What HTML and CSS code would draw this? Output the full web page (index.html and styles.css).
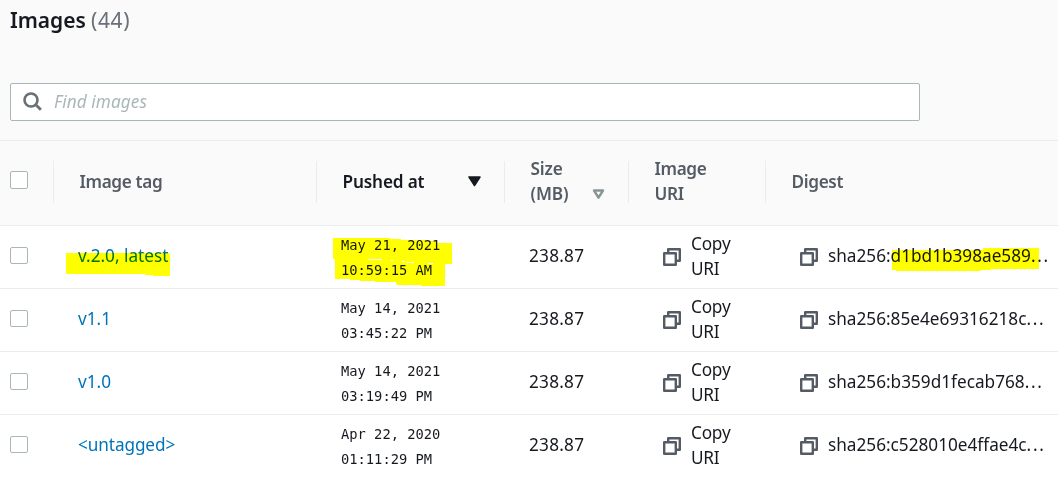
FILE: index.html
```html
<!DOCTYPE html>
<html lang="en">
<head>
<meta charset="utf-8">
<title>Images</title>
<link rel="stylesheet" href="styles.css">
</head>
<body>
<svg class="defs" width="0" height="0" aria-hidden="true">
  <symbol id="copy" viewBox="0 0 18 18"><path d="M5.2 5V1.2h11.6v11.6H13M1.2 5.2h11.6v11.6H1.2z" fill="none" stroke="#545b64" stroke-width="2.4" stroke-linejoin="round"/></symbol>
</svg>
<header class="top">
  <h1 class="title">Images <span class="count">(44)</span></h1>
  <div class="search">
    <svg class="search-icon" width="20" height="20" viewBox="0 0 20 20"><circle cx="8" cy="8" r="6.5" fill="none" stroke="#687078" stroke-width="2.6"/><path d="M12.5 12.5l5.4 5.2" stroke="#687078" stroke-width="2.8"/></svg>
    <span class="placeholder">Find images</span>
  </div>
</header>
<main class="table">
  <div class="row head">
    <div class="cell check"><span class="box"></span></div>
    <div class="cell tag">Image tag</div>
    <div class="cell pushed">Pushed at<svg class="sort" width="13" height="11" viewBox="0 0 13 11"><path d="M1 1h11L6.5 9.5z" fill="#16191f" stroke="#16191f" stroke-width="1.5" stroke-linejoin="round"/></svg></div>
    <div class="cell size"><span>Size<br>(MB)</span><svg class="sort low" width="13" height="11" viewBox="0 0 13 11"><path d="M2 1.5h9L6.5 8.7z" fill="none" stroke="#879596" stroke-width="2.4" stroke-linejoin="round"/></svg></div>
    <div class="cell uri">Image<br>URI</div>
    <div class="cell digest">Digest</div>
  </div>
  <div class="row">
    <div class="cell check"><span class="box"></span></div>
    <div class="cell tag"><a class="link latest">v.2.0, latest</a></div>
    <div class="cell pushed">May 21, 2021<br>10:59:15 AM</div>
    <div class="cell size">238.87</div>
    <div class="cell uri"><svg class="copy"><use href="#copy"/></svg><span>Copy<br>URI</span></div>
    <div class="cell digest"><svg class="copy"><use href="#copy"/></svg><span class="hash">sha256:d1bd1b398ae589<span class="more">...</span></span></div>
  </div>
  <div class="row">
    <div class="cell check"><span class="box"></span></div>
    <div class="cell tag"><a class="link">v1.1</a></div>
    <div class="cell pushed">May 14, 2021<br>03:45:22 PM</div>
    <div class="cell size">238.87</div>
    <div class="cell uri"><svg class="copy"><use href="#copy"/></svg><span>Copy<br>URI</span></div>
    <div class="cell digest"><svg class="copy"><use href="#copy"/></svg><span class="hash">sha256:85e4e69316218c<span class="more">...</span></span></div>
  </div>
  <div class="row">
    <div class="cell check"><span class="box"></span></div>
    <div class="cell tag"><a class="link">v1.0</a></div>
    <div class="cell pushed">May 14, 2021<br>03:19:49 PM</div>
    <div class="cell size">238.87</div>
    <div class="cell uri"><svg class="copy"><use href="#copy"/></svg><span>Copy<br>URI</span></div>
    <div class="cell digest"><svg class="copy"><use href="#copy"/></svg><span class="hash">sha256:b359d1fecab768<span class="more">...</span></span></div>
  </div>
  <div class="row">
    <div class="cell check"><span class="box"></span></div>
    <div class="cell tag"><a class="link untagged">&lt;untagged&gt;</a></div>
    <div class="cell pushed">Apr 22, 2020<br>01:11:29 PM</div>
    <div class="cell size">238.87</div>
    <div class="cell uri"><svg class="copy"><use href="#copy"/></svg><span>Copy<br>URI</span></div>
    <div class="cell digest"><svg class="copy"><use href="#copy"/></svg><span class="hash">sha256:c528010e4ffae4c<span class="more">...</span></span></div>
  </div>
</main>
<svg class="marker" width="1058" height="483" viewBox="0 0 1058 483" shape-rendering="crispEdges" fill="#ff0" aria-hidden="true">
  <path fill-rule="evenodd" d="M333 238H390V239H401V240H426V241H436V243H452V264H445V286H421V285H397V284H396V282H375V281H360V280H350V279H335V259H333ZM368 259H382V260H368ZM391 260H393V261H391ZM402 261H405V262H402ZM407 262H414V263H407ZM428 263H433V264H428Z"/>
  <path d="M66 253H169V254H170V276H153V275H145V274H66Z"/>
  <path d="M892 250H983V248H1039V269H991V270H981V271H896V270H892Z"/>
</svg>
</body>
</html>
```

FILE: styles.css
```css
* { box-sizing: border-box; }
body {
  margin: 0;
  width: 1058px;
  height: 483px;
  overflow: hidden;
  background: #fff;
  color: #16191f;
  font: 17.2px/25px "Noto Sans", "Open Sans", sans-serif;
}
.defs { position: absolute; }
.top {
  height: 141px;
  padding: 5px 10px 0;
  background: #fafafa;
  border-bottom: 1px solid #eaeded;
}
.title {
  margin: 0 0 48px;
  font-size: 21px;
  line-height: 30px;
  font-weight: 600;
  letter-spacing: -0.05px;
}
.count { color: #687078; font-weight: 400; letter-spacing: 0.6px; }
.search {
  display: flex;
  align-items: center;
  gap: 11px;
  width: 910px;
  height: 38px;
  padding: 0 12px;
  background: #fff;
  border: 1px solid #aab7b8;
  border-radius: 2px;
}
.placeholder { margin-bottom: 2px; color: #aab7b8; font-style: italic; letter-spacing: 0.07px; }
.row {
  display: grid;
  grid-template-columns: 53px 263px 188px 124px 137px 293px;
  grid-template-rows: 62px;
  height: 63px;
  border-bottom: 1px solid #eaeded;
}
.row:last-child { border-bottom: 0; }
.cell {
  display: flex;
  align-items: center;
  padding: 0 0 3px 25px;
  white-space: nowrap;
}
.check { padding: 0 0 3px 10px; }
.box {
  width: 18px;
  height: 17px;
  background: #fff;
  border: 1px solid #aab7b8;
  border-radius: 2px;
}
.head {
  grid-template-rows: 42px;
  height: 85px;
  padding-top: 20px;
  background: #fafafa;
  color: #545b64;
  font-weight: 600;
  letter-spacing: -0.35px;
}
.head .cell { padding: 0 0 2px 25.5px; border-left: 1px solid #eaeded; }
.head .check { padding: 0 0 4px 10px; border-left: 0; }
.head .box { height: 18px; }
.head .pushed {
  justify-content: space-between;
  padding-right: 23px;
  color: #16191f;
  letter-spacing: -0.15px;
}
.head .size { justify-content: space-between; padding-right: 23px; letter-spacing: -0.1px; }
.head .low { margin-top: 27px; }
.row:not(.head) .pushed {
  padding-top: 2px;
  padding-bottom: 0;
  font-family: "DejaVu Sans Mono", monospace;
  font-size: 13.75px;
}
.row:not(.head) .size { letter-spacing: 0.25px; }
.row:not(.head) .uri { letter-spacing: -0.2px; }
.link { color: #0073bb; }
.untagged { letter-spacing: -0.1px; }
.copy { flex: none; width: 18px; height: 18px; margin: 3px 10px 0 0; }
.row:not(.head) .uri, .row:not(.head) .digest { padding-left: 35px; }
.more { letter-spacing: 1.7px; }
.marker {
  position: absolute;
  top: 0;
  left: 0;
  mix-blend-mode: multiply;
  pointer-events: none;
}
```
